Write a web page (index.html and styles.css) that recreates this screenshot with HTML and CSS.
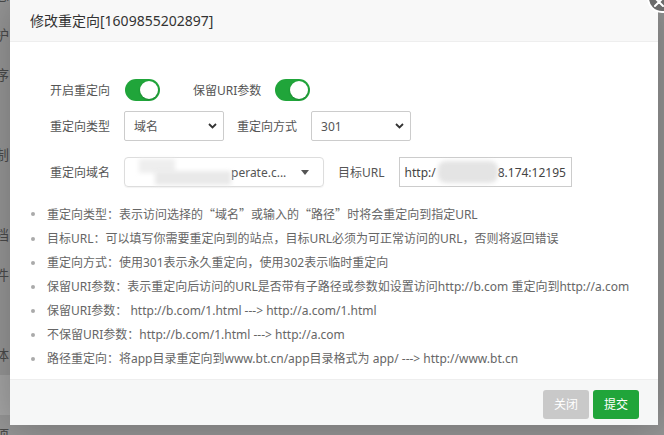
FILE: index.html
```html
<!doctype html>
<html lang="zh-CN">

<head>
  <meta charset="UTF-8" />
  <meta name="viewport" content="width=device-width, initial-scale=1.0" />
  <title>修改重定向</title>
  <link rel="stylesheet" href="styles.css">
</head>

<body>
  <div class="side">
    <span>总</span>
    <span>护</span>
    <span>序</span>
    <span></span>
    <span>制</span>
    <span></span>
    <span>档</span>
    <span>件</span>
    <span></span>
    <span>体</span>
    <span class="active"></span>
    <span>项</span>
  </div>

  <div class="layer">
    <div class="layer-title">修改重定向[1609855202897]</div>
    <a class="layer-close" href="#">
      <svg width="12" height="12" viewBox="0 0 12 12"><path d="M2 2L10 10M10 2L2 10" stroke="#fff" stroke-width="2" stroke-linecap="round" /></svg>
    </a>

    <div class="layer-content">
      <div class="line first">
        <span class="tname">开启重定向</span>
        <span class="switch"></span>
        <span class="tname gap">保留URI参数</span>
        <span class="switch"></span>
      </div>

      <div class="line second">
        <span class="tname">重定向类型</span>
        <div class="select">
          <span>域名</span>
          <svg width="9" height="6" viewBox="0 0 9 6"><path d="M1 1L4.5 4.5L8 1" fill="none" stroke="#333" stroke-width="1.8" /></svg>
        </div>
        <span class="tname">重定向方式</span>
        <div class="select">
          <span>301</span>
          <svg width="9" height="6" viewBox="0 0 9 6"><path d="M1 1L4.5 4.5L8 1" fill="none" stroke="#333" stroke-width="1.8" /></svg>
        </div>
      </div>

      <div class="line">
        <span class="tname">重定向域名</span>
        <div class="select domain">
          <span class="value"><i class="blur blur-a"></i><i class="blur blur-b"></i>perate.c...</span>
          <svg width="8" height="5" viewBox="0 0 8 5"><path d="M0 0H8L4 5Z" fill="#555" /></svg>
        </div>
        <span class="tname">目标URL</span>
        <div class="url">http:/<i class="blur blur-c"></i>8.174:12195</div>
      </div>

      <ul class="tips">
        <li>重定向类型：表示访问选择的<span class="q">“</span>域名<span class="q">”</span>或输入的<span class="q">“</span>路径<span class="q">”</span>时将会重定向到指定URL</li>
        <li>目标URL：可以填写你需要重定向到的站点，目标URL必须为可正常访问的URL，否则将返回错误</li>
        <li>重定向方式：使用301表示永久重定向，使用302表示临时重定向</li>
        <li>保留URI参数：表示重定向后访问的URL是否带有子路径或参数如设置访问http://b.com 重定向到http://a.com</li>
        <li>保留URI参数： http://b.com/1.html ---&gt; http://a.com/1.html</li>
        <li>不保留URI参数：http://b.com/1.html ---&gt; http://a.com</li>
        <li>路径重定向：将app目录重定向到www.bt.cn/app目录格式为 app/ ---&gt; http://www.bt.cn</li>
      </ul>
    </div>

    <div class="layer-btn">
      <a class="btn btn-close" href="#">关闭</a>
      <a class="btn btn-submit" href="#">提交</a>
    </div>
  </div>
</body>

</html>
```

FILE: styles.css
```css
* {
  box-sizing: border-box;
}

html,
body {
  margin: 0;
  padding: 0;
  width: 100%;
  height: 100%;
}

body {
  position: relative;
  overflow: hidden;
  font-family: "Noto Sans", "Noto Sans CJK SC", sans-serif;
  font-size: 12px;
  color: #555;
  background-color: #959595;
}

/* page behind the shade, only its right edge shows */
.side {
  width: 10px;
  margin-top: -25px;
  display: flex;
  flex-direction: column;
  overflow: hidden;
}

.side span {
  flex: none;
  height: 40px;
  line-height: 40px;
  font-size: 14px;
  color: #4a4a4a;
  text-indent: -5px;
  white-space: nowrap;
}

.side .active {
  background-color: #a4a4a4;
}

.layer {
  position: absolute;
  top: 0;
  left: 10px;
  width: 648px;
  height: 425px;
  display: flex;
  flex-direction: column;
  background-color: white;
  box-shadow: 1px 1px 40px rgba(0, 0, 0, 0.25);
}

.layer-title {
  height: 42px;
  line-height: 41px;
  padding-left: 20px;
  font-size: 14px;
  color: #333;
  background-color: #f8f8f8;
  border-bottom: 1px solid #eee;
}

.layer-close {
  position: absolute;
  top: -17px;
  right: -19px;
  width: 30px;
  height: 30px;
  display: flex;
  align-items: center;
  justify-content: center;
  border: 2px solid white;
  border-radius: 50%;
  background-color: #6b6b6b;
}

.layer-close svg {
  margin: 8px 0 0 -6px;
}

.layer-content {
  flex: 1;
  padding: 33px 0 0 40px;
}

.line {
  display: flex;
  align-items: center;
  height: 30px;
}

.line.first {
  margin-bottom: 6px;
}

.line.second {
  margin-bottom: 16px;
}

.tname {
  margin-right: 14px;
  color: #555;
  white-space: nowrap;
}

.tname.gap {
  margin-left: 33px;
}

.switch {
  position: relative;
  width: 35px;
  height: 22px;
  border-radius: 11px;
  background-color: #20a53a;
}

.switch::after {
  content: "";
  position: absolute;
  top: 2px;
  right: 2px;
  width: 18px;
  height: 18px;
  border-radius: 50%;
  background-color: white;
  box-shadow: 0 1px 2px rgba(0, 0, 0, 0.2);
}

.line .switch:nth-child(2) {
  margin-left: 1px;
}

.select {
  width: 100px;
  height: 30px;
  margin-right: 13px;
  padding: 0 6px 0 9px;
  display: flex;
  align-items: center;
  justify-content: space-between;
  border: 1px solid #ccc;
  border-radius: 2px;
  color: #555;
}

.select.domain {
  width: 200px;
  margin-right: 14px;
  padding: 0 14px 0 12px;
  border-color: #ddd;
  border-radius: 4px;
  box-shadow: 0 1px 1px rgba(0, 0, 0, 0.05);
}

.select .value {
  display: flex;
  align-items: center;
  white-space: nowrap;
}

.blur {
  display: inline-block;
  background-color: #e9e9e9;
  filter: blur(2px);
}

.blur-a {
  width: 36px;
  height: 14px;
  margin: -12px -20px 0 2px;
  background-color: #eeeeee;
}

.blur-b {
  width: 76px;
  height: 14px;
  margin: 12px 0 0 0;
}

.url {
  width: 173px;
  height: 30px;
  padding-left: 5px;
  display: flex;
  align-items: center;
  border: 1px solid #ccc;
  color: #444;
  white-space: nowrap;
}

.blur-c {
  width: 60px;
  height: 22px;
  margin-left: 2px;
  border-radius: 8px;
  background-color: #e4e4e4;
}

.tips {
  margin: 15px 0 0 -3px;
  padding: 0;
  list-style: none;
}

.tips li {
  position: relative;
  line-height: 24px;
  color: #666;
  white-space: nowrap;
}

.tips li::before {
  content: "";
  position: absolute;
  top: 10px;
  left: -16px;
  width: 4px;
  height: 4px;
  border-radius: 50%;
  background-color: #aaa;
}

.q {
  font-family: "Noto Sans CJK SC", sans-serif;
}

.layer-btn {
  height: 46px;
  padding: 10px 19px 0 0;
  display: flex;
  justify-content: flex-end;
  gap: 4px;
  background-color: #f6f7f7;
  border-top: 1px solid #eee;
}

.btn {
  height: 29px;
  line-height: 29px;
  padding: 0 11px;
  border-radius: 3px;
  font-size: 12px;
  color: white;
  text-decoration: none;
}

.btn-close {
  background-color: #c9c9c9;
}

.btn-submit {
  background-color: #20a53a;
}
```
